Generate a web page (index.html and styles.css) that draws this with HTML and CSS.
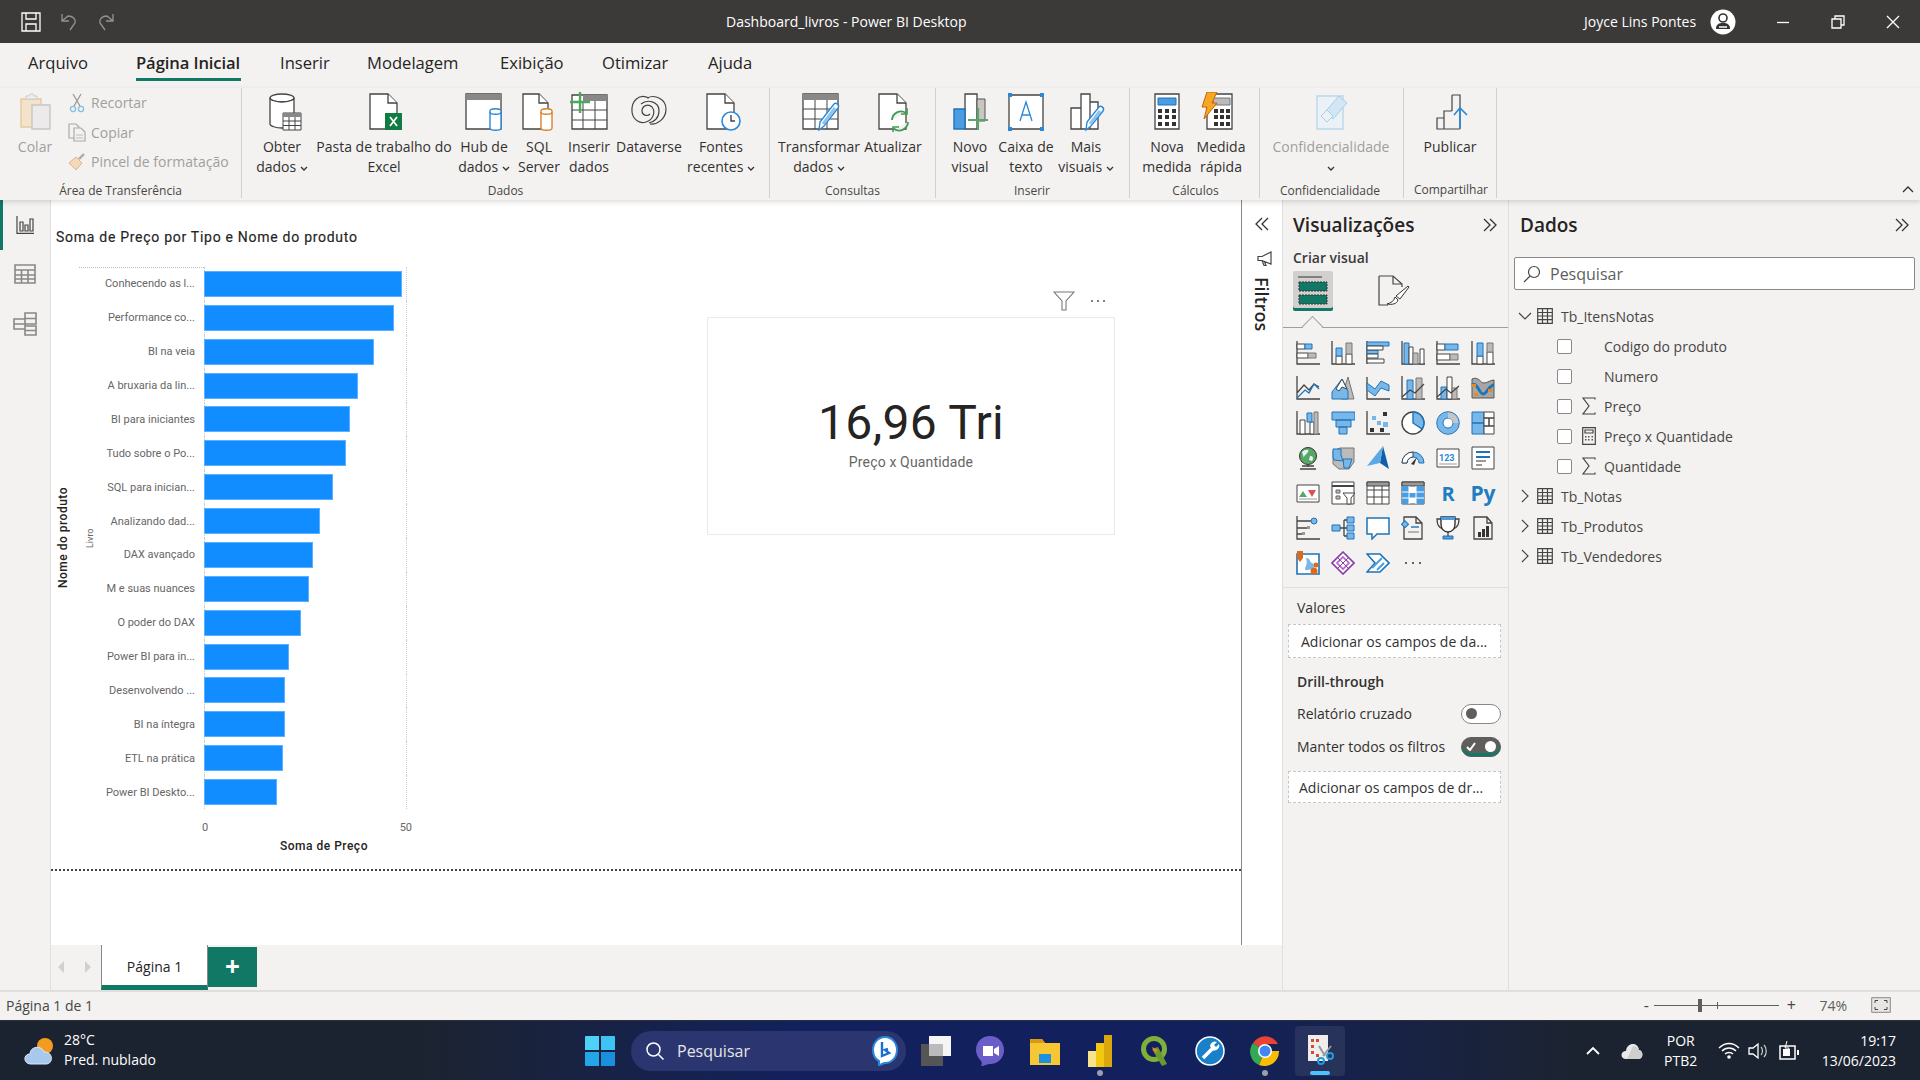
FILE: index.html
```html
<!DOCTYPE html>
<html lang="pt-BR">
<head>
<meta charset="utf-8">
<title>Dashboard_livros - Power BI Desktop</title>
<link rel="stylesheet" href="styles.css">
</head>
<body>
<svg class="defs" width="0" height="0" aria-hidden="true">
  <symbol id="tbl" viewBox="0 0 16 16"><path class="ln" d="M.7.7h14.6v14.6H.7zM.7 4.5h14.6M.7 8h14.6M.7 11.7h14.6M5.5.7v14.6M10.5.7v14.6"/></symbol>
  <symbol id="sig" viewBox="0 0 14 18"><path class="ln" d="M13 2.5V1H1l6 8-6 8h12v-1.5"/></symbol>
  <symbol id="dbl" viewBox="0 0 16 16"><path class="ln2" d="M2 2l6 6-6 6M8 2l6 6-6 6"/></symbol>
  <symbol id="car" viewBox="0 0 8 5"><path class="ln2" d="M1 1l3 3 3-3"/></symbol>
</svg>

<header class="titlebar">
  <div class="qa">
    <svg width="20" height="20" viewBox="0 0 20 20"><path class="wl" d="M1 1h18v18H1zM5 1v6h10V1M5 19v-7h10v7"/></svg>
    <svg class="dim" width="18" height="20" viewBox="0 0 18 20"><path class="wl" d="M2 2v7h7M2 9l6-5c5 0 8 3 7 7l-5 7"/></svg>
    <svg class="dim" width="18" height="20" viewBox="0 0 18 20"><path class="wl" d="M16 2v7H9M16 9l-6-5C5 4 2 7 3 11l5 7"/></svg>
  </div>
  <div class="doc">Dashboard_livros - Power BI Desktop</div>
  <div class="user">
    <span>Joyce Lins Pontes</span>
    <svg width="26" height="26" viewBox="0 0 26 26"><circle cx="13" cy="13" r="12.5" fill="#fff"/><circle cx="13" cy="9" r="4" fill="none" stroke="#333" stroke-width="1.6"/><path d="M6 20c0-5 3-6 7-6s7 1 7 6z" fill="#333"/><path d="M9 18h8" stroke="#fff" stroke-width="1.5"/></svg>
  </div>
  <div class="win">
    <svg width="14" height="14" viewBox="0 0 14 14"><path class="wl" d="M1 7.5h12"/></svg>
    <svg width="14" height="14" viewBox="0 0 14 14"><path class="wl" d="M1 4h9v9H1zM4 4V1h9v9h-3"/></svg>
    <svg width="14" height="14" viewBox="0 0 14 14"><path class="wl" d="M1 1l12 12M13 1L1 13"/></svg>
  </div>
</header>

<nav class="tabs">
  <a class="t t1">Arquivo</a>
  <a class="t t2 on">Página Inicial</a>
  <a class="t t3">Inserir</a>
  <a class="t t4">Modelagem</a>
  <a class="t t5">Exibição</a>
  <a class="t t6">Otimizar</a>
  <a class="t t7">Ajuda</a>
</nav>

<section class="ribbon">
  <div class="grp g-clip">
    <div class="body">
      <div class="btn w-colar off">
        <svg class="ic" width="40" height="40" viewBox="0 0 40 40"><path d="M6 7h20v28H6z" fill="#f4e3cb" stroke="#e6c9a0" stroke-width="1.4"/><path d="M11 7V4h3l1-2h3l1 2h3v3z" fill="#eee" stroke="#ccc"/><path d="M17 13h18v24H17z" fill="#eceaea" stroke="#c8c6c4" stroke-width="1.4"/></svg>
        <span>Colar</span>
      </div>
      <div class="small off">
        <div class="sm"><svg width="18" height="20" viewBox="0 0 18 20"><path d="M5 1l7 12M13 1L6 13" stroke="#999" fill="none" stroke-width="1.3"/><circle cx="5" cy="16" r="2.6" fill="none" stroke="#88bde0" stroke-width="1.3"/><circle cx="13" cy="16" r="2.6" fill="none" stroke="#88bde0" stroke-width="1.3"/></svg>Recortar</div>
        <div class="sm"><svg width="18" height="20" viewBox="0 0 18 20"><path d="M1 2h7l3 3v11H1z" fill="none" stroke="#aaa" stroke-width="1.2"/><path d="M6 6h7l4 4v9H6z" fill="#f3f2f1" stroke="#aaa" stroke-width="1.2"/><path d="M8 13h7M8 16h7" stroke="#bbb"/></svg>Copiar</div>
        <div class="sm"><svg width="18" height="20" viewBox="0 0 18 20"><path d="M11 7l5-5" stroke="#aaa" stroke-width="2.4"/><path d="M8 5l6 6-6 7-7-7z" fill="#f5d9b8" stroke="#d8b58e"/></svg>Pincel de formatação</div>
      </div>
    </div>
    <div class="lbl">Área de Transferência</div>
  </div>

  <div class="grp g-dados">
    <div class="body">
      <div class="btn w-obter">
        <svg class="ic" width="40" height="40" viewBox="0 0 40 40"><ellipse cx="18" cy="6" rx="12" ry="4" class="wf"/><path class="wf" d="M6 6v26c0 2 6 4 12 4h12V6c0 2-6 4-12 4S6 8 6 6z"/><path d="M19 21h18v17H19z" fill="#fff" stroke="#444"/><path d="M19 21h18v4H19z" fill="#8a8886"/><path d="M19 29h18M19 33.500h18M25 25v13M31 25v13" stroke="#444" fill="none"/></svg>
        <span>Obter<br>dados <svg class="car" width="8" height="5"><use href="#car"/></svg></span>
      </div>
      <div class="btn w-pasta">
        <svg class="ic" width="40" height="40" viewBox="0 0 40 40"><path class="wf" d="M6 2h18l9 9v26H6z"/><path class="wf" d="M24 2v9h9"/><path d="M21 21h17v17H21z" fill="#107c41"/><path d="M26 25l7 9M33 25l-7 9" stroke="#fff" stroke-width="1.800"/></svg>
        <span>Pasta de trabalho do<br>Excel</span>
      </div>
      <div class="btn w-hub">
        <svg class="ic" width="40" height="40" viewBox="0 0 40 40"><path class="wf" d="M2 2h35v35H2z"/><path d="M2 2h35v6H2z" fill="#8a8886"/><path d="M26 19c0-3 11-3 11 0v17c0 3-11 3-11 0z" fill="#fff" stroke="#2b88d8" stroke-width="1.400"/><path d="M26 20c0 3 11 3 11 0" fill="none" stroke="#2b88d8" stroke-width="1.400"/></svg>
        <span>Hub de<br>dados <svg class="car" width="8" height="5"><use href="#car"/></svg></span>
      </div>
      <div class="btn w-sql">
        <svg class="ic" width="40" height="40" viewBox="0 0 40 40"><path class="wf" d="M4 2h16l9 9v26H4z"/><path class="wf" d="M20 2v9h9"/><path d="M22 19c0-3 11-3 11 0v17c0 3-11 3-11 0z" fill="#fff" stroke="#d9822b" stroke-width="1.400"/><path d="M22 20c0 3 11 3 11 0" fill="none" stroke="#d9822b" stroke-width="1.400"/></svg>
        <span>SQL<br>Server</span>
      </div>
      <div class="btn w-ins">
        <svg class="ic" width="40" height="40" viewBox="0 0 40 40"><path class="wf" d="M3 3h35v34H3z"/><path d="M14 3h24v6H14z" fill="#8a8886"/><path d="M3 18h35M3 28h35M14 9v28M26 9v28" stroke="#444" fill="none"/><path d="M11 0v21M1 10h20" stroke="#4ca85c" stroke-width="2.400"/></svg>
        <span>Inserir<br>dados</span>
      </div>
      <div class="btn w-dv">
        <svg class="ic" width="40" height="40" viewBox="0 0 40 40"><path class="ln" d="M20 6C10 1 2 9 3 20c1 8 8 12 14 10 7-2 10-10 6-15-4-4-10-1-10 4 0 4 5 6 8 3 M18 6c8-4 19 1 19 11 0 10-9 16-16 15 M12 12c6-5 18-3 18 7 0 7-5 11-10 12"/></svg>
        <span>Dataverse</span>
      </div>
      <div class="btn w-fon">
        <svg class="ic" width="40" height="40" viewBox="0 0 40 40"><path class="wf" d="M6 2h18l9 9v26H6z"/><path class="wf" d="M24 2v9h9"/><circle cx="30" cy="29" r="9" fill="#fff" stroke="#2b88d8" stroke-width="1.600"/><path d="M30 23v6h4" fill="none" stroke="#444" stroke-width="1.400"/></svg>
        <span>Fontes<br>recentes <svg class="car" width="8" height="5"><use href="#car"/></svg></span>
      </div>
    </div>
    <div class="lbl">Dados</div>
  </div>

  <div class="grp g-cons">
    <div class="body">
      <div class="btn w-tra">
        <svg class="ic" width="40" height="40" viewBox="0 0 40 40"><path class="wf" d="M2 2h35v35H2z"/><path d="M2 2h35v6H2z" fill="#8a8886"/><path d="M2 17h35M2 27h35M14 8v29M26 8v29" stroke="#444" fill="none"/><path d="M18 38l1-8 14-18c2-2 6 1 4 4L23 34z" fill="#fff" stroke="#2b88d8" stroke-width="1.400"/><path d="M22 32l12-16" stroke="#8cc4ee" stroke-width="3"/></svg>
        <span>Transformar<br>dados <svg class="car" width="8" height="5"><use href="#car"/></svg></span>
      </div>
      <div class="btn w-atu">
        <svg class="ic" width="40" height="40" viewBox="0 0 40 40"><path class="wf" d="M6 2h18l9 9v26H6z"/><path class="wf" d="M24 2v9h9"/><path d="M19 28a9 9 0 0 1 14-7M35 30a9 9 0 0 1-14 7" fill="#f3f2f1" stroke="#3f9a52" stroke-width="1.800"/><path d="M34 16v6h-6M20 40v-5h6" fill="none" stroke="#3f9a52" stroke-width="1.600"/></svg>
        <span>Atualizar</span>
      </div>
    </div>
    <div class="lbl">Consultas</div>
  </div>

  <div class="grp g-ins">
    <div class="body">
      <div class="btn w-nov">
        <svg class="ic" width="40" height="40" viewBox="0 0 40 40"><path class="wf" d="M15 2h12v35H15z"/><path d="M27 7h8v22h-8z" fill="#c8c6c4" stroke="#555"/><path d="M4 17h11v20H4z" fill="#4a9de0" stroke="#1f73b7" stroke-width="1.400"/><path d="M28 16v22M18 28h20" stroke="#5ba56a" stroke-width="2.200"/></svg>
        <span>Novo<br>visual</span>
      </div>
      <div class="btn w-cai">
        <svg class="ic" width="40" height="40" viewBox="0 0 40 40"><path class="wf" d="M3 3h34v34H3z"/><path d="M2 1h4v4H2zM34 1h4v4h-4zM2 35h4v4H2zM34 35h4v4h-4z" fill="#2b88d8"/><path d="M14 29l6-19 6 19M16 23h8" fill="none" stroke="#2b88d8" stroke-width="1.300"/></svg>
        <span>Caixa de<br>texto</span>
      </div>
      <div class="btn w-mai">
        <svg class="ic" width="40" height="40" viewBox="0 0 40 40"><path class="wf" d="M13 2h9v35h-9zM22 10h8v27h-8zM3 16h10v21H3z"/><path d="M18 38l1-8 12-15c2-2 6 1 4 4L23 34z" fill="#fff" stroke="#2b88d8" stroke-width="1.400"/><path d="M22 32l10-13" stroke="#8cc4ee" stroke-width="3"/></svg>
        <span>Mais<br>visuais <svg class="car" width="8" height="5"><use href="#car"/></svg></span>
      </div>
    </div>
    <div class="lbl">Inserir</div>
  </div>

  <div class="grp g-cal">
    <div class="body">
      <div class="btn w-nma">
        <svg class="ic" width="40" height="40" viewBox="0 0 40 40"><path class="wf" d="M8 2h24v35H8z"/><path d="M11 6h18v7H11z" fill="#4a9de0" stroke="#1f73b7"/><path d="M11 17h4v4h-4zM18 17h4v4h-4zM25 17h4v4h-4zM11 23h4v4h-4zM18 23h4v4h-4zM25 23h4v4h-4zM11 30h4v4h-4zM18 30h4v4h-4zM25 30h4v4h-4z" fill="#333"/></svg>
        <span>Nova<br>medida</span>
      </div>
      <div class="btn w-mer">
        <svg class="ic" width="40" height="40" viewBox="0 0 40 40"><path class="wf" d="M11 2h25v35H11z"/><path d="M17 6h17v7H17z" fill="#bbb" stroke="#777"/><path d="M18 17h4v4h-4zM24 17h4v4h-4zM30 17h4v4h-4zM18 23h4v4h-4zM24 23h4v4h-4zM30 23h4v4h-4zM18 30h4v4h-4zM24 30h4v4h-4zM30 30h4v4h-4z" fill="#333"/><path d="M11 0h10l-5 11h5L8 27l3-12H6z" fill="#f7a823" stroke="#c8620e"/></svg>
        <span>Medida<br>rápida</span>
      </div>
    </div>
    <div class="lbl">Cálculos</div>
  </div>

  <div class="grp g-con">
    <div class="body">
      <div class="btn w-cfd off">
        <svg class="ic" width="40" height="40" viewBox="0 0 40 40"><path d="M6 4h26v33H6z" fill="#eaf2f8" stroke="#bcd8ea" stroke-width="1.400"/><path d="M14 20L28 4l8 7-14 16z" fill="#d2e6f4" stroke="#a9cee6"/><path d="M10 24l6-6 6 6-6 6z" fill="#eaf2f8" stroke="#a9cee6"/></svg>
        <span>Confidencialidade<br><svg class="car" width="8" height="5"><use href="#car"/></svg></span>
      </div>
    </div>
    <div class="lbl">Confidencialidade</div>
  </div>

  <div class="grp g-com">
    <div class="body">
      <div class="btn w-pub">
        <svg class="ic" width="40" height="40" viewBox="0 0 40 40"><path class="ln" d="M18 3h8v34M18 3v16M18 19H10v18h16M10 26H3v11h7"/><path d="M26 37V16M20 23l6-7 7 7" fill="none" stroke="#2b88d8" stroke-width="1.600"/></svg>
        <span>Publicar</span>
      </div>
    </div>
    <div class="lbl">Compartilhar</div>
  </div>
  <svg class="collapse" width="12" height="8" viewBox="0 0 12 8"><path class="ln2" d="M1 7l5-5 5 5"/></svg>
</section>

<main class="main">
  <aside class="rail">
    <div class="rail-i act"><svg width="18" height="18" viewBox="0 0 18 18"><path class="ln" d="M1 0v17.300h17M4 6h3v9H4zM9 9h3v6H9zM14 3h3v12h-3z"/></svg></div>
    <div class="rail-i"><svg width="22" height="20" viewBox="0 0 22 20"><path class="lg" d="M1 1h20v18H1zM1 6h20M1 11h20M1 15h20M7.500 6v13M14 6v13"/></svg></div>
    <div class="rail-i"><svg width="24" height="24" viewBox="0 0 24 24"><path class="lg" d="M12 1h11v11H12zM12 6.500h11M1 7h11v10H1zM1 12h11M12 14h11v9H12zM12 18.500h11"/></svg></div>
  </aside>

  <div class="center">
    <div class="upper">
      <div class="canvas">
        <div class="page"></div>

        <article class="chart">
          <h2 class="ctitle">Soma de Preço por Tipo e Nome do produto</h2>
          <div class="cbody">
            <div class="ytitle">Nome do produto</div>
            <div class="ytype">Livro</div>
            <div class="plot">
              <div class="r"><span class="rl">Conhecendo as l...</span><span class="tr"><i class="bar" style="width:198px"></i></span></div>
              <div class="r"><span class="rl">Performance co...</span><span class="tr"><i class="bar" style="width:190px"></i></span></div>
              <div class="r"><span class="rl">BI na veia</span><span class="tr"><i class="bar" style="width:170px"></i></span></div>
              <div class="r"><span class="rl">A bruxaria da lin...</span><span class="tr"><i class="bar" style="width:154px"></i></span></div>
              <div class="r"><span class="rl">BI para iniciantes</span><span class="tr"><i class="bar" style="width:146px"></i></span></div>
              <div class="r"><span class="rl">Tudo sobre o Po...</span><span class="tr"><i class="bar" style="width:142px"></i></span></div>
              <div class="r"><span class="rl">SQL para inician...</span><span class="tr"><i class="bar" style="width:129px"></i></span></div>
              <div class="r"><span class="rl">Analizando dad...</span><span class="tr"><i class="bar" style="width:116px"></i></span></div>
              <div class="r"><span class="rl">DAX avançado</span><span class="tr"><i class="bar" style="width:109px"></i></span></div>
              <div class="r"><span class="rl">M e suas nuances</span><span class="tr"><i class="bar" style="width:105px"></i></span></div>
              <div class="r"><span class="rl">O poder do DAX</span><span class="tr"><i class="bar" style="width:97px"></i></span></div>
              <div class="r"><span class="rl">Power BI para in...</span><span class="tr"><i class="bar" style="width:85px"></i></span></div>
              <div class="r"><span class="rl">Desenvolvendo ...</span><span class="tr"><i class="bar" style="width:81px"></i></span></div>
              <div class="r"><span class="rl">BI na íntegra</span><span class="tr"><i class="bar" style="width:81px"></i></span></div>
              <div class="r"><span class="rl">ETL na prática</span><span class="tr"><i class="bar" style="width:79px"></i></span></div>
              <div class="r"><span class="rl">Power BI Deskto...</span><span class="tr"><i class="bar" style="width:73px"></i></span></div>
            </div>
          </div>
          <div class="ticks"><span>0</span><span>50</span></div>
          <div class="xtitle">Soma de Preço</div>
        </article>

        <article class="card">
          <div class="cardtools">
            <svg width="22" height="20" viewBox="0 0 22 20"><path d="M1 1h20l-8 9v9H9v-9z" fill="none" stroke="#777" stroke-width="1.100"/></svg>
            <span class="dots"><i></i><i></i><i></i></span>
          </div>
          <div class="val">16,96 Tri</div>
          <div class="vlab">Preço x Quantidade</div>
        </article>
      </div>

      <aside class="filters">
        <svg class="fdbl" width="16" height="16"><use href="#dbl" transform="matrix(-1 0 0 1 16 0)"/></svg>
        <svg class="fmeg" width="16" height="16" viewBox="0 0 16 16"><path class="ln" d="M14 1v12L5 9.500H1v-4h4zM5 9.500l2 5h2l-1.500-4"/></svg>
        <div class="ftext">Filtros</div>
      </aside>
    </div>
    <div class="pages">
      <svg class="parr" width="8" height="12" viewBox="0 0 8 12"><path d="M7 0v12L1 6z" fill="#d2d0ce"/></svg>
      <svg class="parr p2" width="8" height="12" viewBox="0 0 8 12"><path d="M1 0v12l6-6z" fill="#d2d0ce"/></svg>
      <div class="ptab">Página 1</div>
      <div class="padd">+</div>
    </div>
  </div>

  <aside class="viz">
    <div class="phead"><h3>Visualizações</h3><svg width="16" height="16"><use href="#dbl"/></svg></div>
    <div class="build">Criar visual</div>
    <div class="modes">
      <div class="mode on">
        <svg width="32" height="32" viewBox="0 0 32 32"><path d="M1 2h24" stroke="#333"/><path d="M2 7h28v9H2zM2 20h28v9H2z" fill="#117865" stroke="#333" stroke-dasharray="2 1"/></svg>
      </div>
      <div class="mode">
        <svg width="32" height="32" viewBox="0 0 32 32"><path class="ln" d="M1 1h14l9 8v3M1 1v29h9M15 1v8h9"/><path d="M9 29c4-1 7-3 8-7l3 3c-1 4-6 5-11 4z" fill="#fff" stroke="#333"/><path d="M18 21L30 11l1 1-9 12z" fill="#fff" stroke="#333"/></svg>
      </div>
    </div>
    <div class="notch"></div>
    <div class="vgrid">
      <svg viewBox="0 0 24 24"><path class="k" d="M1 0v23h23"/><path class="w" d="M1 3h8v5H1zM1 12h11v5H1z"/><path class="b" d="M9 3h7v5H9z"/><path class="g" d="M12 12h8v5h-8z"/></svg>
      <svg viewBox="0 0 24 24"><path class="k" d="M1 0v23h23"/><path class="w" d="M5 15h6v8H5zM15 13h6v10h-6z"/><path class="b" d="M5 7h6v8H5z"/><path class="g" d="M15 2h6v11h-6z"/></svg>
      <svg viewBox="0 0 24 24"><path class="k" d="M1 0v23"/><path class="b" d="M1 1h22v4H1zM1 9h11v4H1z"/><path class="w" d="M1 5h16v4H1zM1 13h11v4H1zM1 18h17v4H1z"/></svg>
      <svg viewBox="0 0 24 24"><path class="k" d="M1 0v23h23"/><path class="b" d="M3 2h5v21H3z"/><path class="w" d="M8 6h4v17H8zM19 8h4v15h-4z"/><path class="g" d="M12 12h5v11h-5z"/></svg>
      <svg viewBox="0 0 24 24"><path class="k" d="M1 0v23h23"/><path class="w" d="M1 3h8v6H1zM1 13h13v6H1z"/><path class="b" d="M9 3h13v6H9z"/><path class="g" d="M14 13h8v6h-8z"/></svg>
      <svg viewBox="0 0 24 24"><path class="k" d="M1 0v23h23"/><path class="w" d="M6 15h6v8H6zM16 11h6v12h-6z"/><path class="b" d="M6 2h6v13H6z"/><path class="g" d="M16 2h6v9h-6z"/></svg>

      <svg viewBox="0 0 24 24"><path class="k" d="M1 0v23h23M1 17l7-8 5 5 5-6 5 3"/><path class="c" d="M1 22l8-8 4 3 5-9 5 5"/></svg>
      <svg viewBox="0 0 24 24"><path class="g" d="M10 23L17 1l6 22z"/><path class="b" d="M1 23v-7L11 3l6 12v8z"/><path class="w" d="M5 13l6-10 5 10-5-2-3 4z"/></svg>
      <svg viewBox="0 0 24 24"><path class="k" d="M1 1v22h23"/><path class="b" d="M1 7l8 6 6-8 8 4v6l-8-3-6 8-8-6z"/></svg>
      <svg viewBox="0 0 24 24"><path class="k" d="M1 0v23h23"/><path class="b" d="M6 4h6v19H6z"/><path class="g" d="M15 2h6v21h-6z"/><path class="k" d="M1 21l8-7 5 3 9-9"/></svg>
      <svg viewBox="0 0 24 24"><path class="k" d="M1 0v23h23"/><path class="b" d="M5 11h6v12H5z"/><path class="w" d="M11 1h5v22h-5z"/><path class="g" d="M16 12h5v11h-5z"/><path class="k" d="M1 21l9-8 5 4 8-7"/></svg>
      <svg viewBox="0 0 24 24"><path d="M1 3c7-3 8 4 12 4s6-3 10-3v18H1z" fill="#a8a6a4" stroke="#555"/><path d="M1 9c6-3 7 9 11 9s6-9 11-9" fill="none" stroke="#1f73b7" stroke-width="3"/><path d="M3 17h4v3H3zM17 13h4v3h-4zM1 8h4v3H1z" fill="#e88a1f"/></svg>

      <svg viewBox="0 0 24 24"><path class="k" d="M1 0v23h23"/><path class="w" d="M4 9h5v14H4zM14 11h4v12h-4z"/><path class="g" d="M18 1h4v22h-4z"/><path class="b" d="M11 2h5v9h-5z"/></svg>
      <svg viewBox="0 0 24 24"><path class="b" d="M1 1h23v8H1zM5 9h15v7H5zM8 16h8v7H8z"/></svg>
      <svg viewBox="0 0 24 24"><path class="k" d="M1 0v23h23"/><path d="M4 17h4v4H4zM17 1h4v4h-4zM14 17h4v4h-4z" fill="#333"/><path d="M6 5h4v4H6zM11 10h4v4h-4zM17 11h5v5h-5z" fill="#78b7ea"/></svg>
      <svg viewBox="0 0 24 24"><circle cx="12" cy="12" r="11" fill="#fff" stroke="#444" stroke-width="1.400"/><path d="M12 12V1a11 11 0 0 1 9 17z" fill="#78b7ea" stroke="#1f73b7" stroke-width="1.400"/></svg>
      <svg viewBox="0 0 24 24"><circle cx="12" cy="12" r="8" fill="none" stroke="#78b7ea" stroke-width="6"/><circle cx="12" cy="12" r="11.300" fill="none" stroke="#1f73b7" stroke-width="1"/><circle cx="12" cy="12" r="5" fill="#fff" stroke="#1f73b7"/><path d="M12 7A5 5 0 0 1 17 12h5.500A10.500 10.500 0 0 0 12 1.500z" fill="#c8c6c4"/></svg>
      <svg viewBox="0 0 24 24"><path class="b" d="M1 1h12v11H1zM1 12h12v11H1z"/><path class="w" d="M13 1h10v6H13zM13 7h5v8h-5zM18 7h5v8h-5zM13 15h10v8H13z"/></svg>

      <svg viewBox="0 0 24 24"><circle cx="12" cy="10" r="8.500" fill="#57a867" stroke="#333"/><path d="M6 6c3-3 8-3 6 0s-4 3-4 6zM14 10c3 0 4 2 2 5l-3-1z" fill="#e8f2f8"/><path class="k" d="M6 20h12M12 18v3M4 23h16"/></svg>
      <svg viewBox="0 0 24 24"><path class="g" d="M9 2h14v14l-5 7H8l-6-5V5z"/><path class="b" d="M2 3h8v6l2 6-9-1-1-3z"/><path class="b" d="M12 13h9l-3 9h-5z"/></svg>
      <svg viewBox="0 0 24 24"><path d="M17 0l6 23-9-6z" fill="#0f5fa8"/><path d="M17 0L1 20l13-3z" fill="#5aa9e6"/></svg>
      <svg viewBox="0 0 24 24"><path d="M1 17a11 11 0 0 1 22 0h-5a6 6 0 0 0-12 0z" fill="#78b7ea" stroke="#1f73b7"/><path d="M1 17a11 11 0 0 1 11-11v5a6 6 0 0 0-6 6z" fill="#fff" stroke="#444"/><path d="M10 18l6-7-3 8z" fill="#333"/></svg>
      <svg viewBox="0 0 24 24"><path class="w" d="M1 3h22v18H1z"/><text class="t123" x="3" y="15">123</text><path d="M3 18h18" stroke="#999"/></svg>
      <svg viewBox="0 0 24 24"><path class="w" d="M1 1h22v22H1z"/><path d="M5 6h14M5 11h14" stroke="#1f73b7" stroke-width="2"/><path d="M5 15h10M5 19h6" stroke="#999" stroke-width="2"/></svg>

      <svg viewBox="0 0 24 24"><path class="w" d="M1 4h22v17H1z"/><path d="M3 16l4-6 4 6z" fill="#57a867"/><path d="M12 9h8l-4 7z" fill="#e0504a"/><path d="M3 18h18" stroke="#999"/></svg>
      <svg viewBox="0 0 24 24"><path class="w" d="M1 1h22v22H1z"/><path d="M1 5h22" stroke="#444" stroke-width="2"/><path d="M5 9h4v3H5zM5 15h4v3H5z" fill="#bbb" stroke="#666"/><path d="M12 12h12l-4 5v6h-4v-6z" fill="#fff" stroke="#444"/></svg>
      <svg viewBox="0 0 24 24"><path class="w" d="M1 1h22v22H1zM1 9h22M1 16h22M8 5v18M16 5v18"/><path d="M1 1h22v4H1z" fill="#999" stroke="#444"/></svg>
      <svg viewBox="0 0 24 24"><path class="w" d="M1 1h22v22H1z"/><path d="M1 1h22v4H1z" fill="#999" stroke="#444"/><path d="M1 5h7v18H1zM15 5h8v18h-8zM8 12h7v5H8z" fill="#4a9de0"/><path d="M1 11h22M1 17h22M8 5v18M15 5v18" stroke="#fff"/></svg>
      <span class="rtxt">R</span>
      <span class="pytxt">Py</span>

      <svg viewBox="0 0 24 24"><path class="k" d="M1 0v23h23M1 5h14M1 12h10M1 18h5"/><circle cx="18" cy="5" r="3" fill="#78b7ea" stroke="#1f73b7"/><path d="M11 10h3v3h-3zM6 16h3v3H6z" fill="#999"/></svg>
      <svg viewBox="0 0 24 24"><path class="b" d="M1 9h8v6H1zM16 1h7v6h-7zM16 9h7v6h-7zM16 17h7v6h-7z"/><path class="k" d="M9 12h7M13 4v16M13 4h3M13 20h3"/></svg>
      <svg viewBox="0 0 24 24"><path d="M1 2h22v16H11l-5 5v-5H1z" fill="#fff" stroke="#1f73b7" stroke-width="1.500"/></svg>
      <svg viewBox="0 0 24 24"><path class="k" d="M3 1h12l6 6v16H3zM15 1v6h6"/><path d="M1 6h5v5H1z" fill="#78b7ea" stroke="#1f73b7" transform="rotate(45 4 9)"/><path d="M10 11h8" stroke="#1f73b7" stroke-width="1.400"/><path d="M7 16h11" stroke="#999" stroke-width="1.400"/></svg>
      <svg viewBox="0 0 24 24"><path class="k" d="M5 3H1c0 6 2 9 6 10M19 3h4c0 6-2 9-6 10M12 16v4"/><path d="M5 1h14v7c0 5-3 8-7 8s-7-3-7-8z" fill="#fff" stroke="#333" stroke-width="1.400"/><path d="M5 1h14v3H5z" fill="#4a9de0"/><path d="M7 20h10v3H7z" fill="#4a9de0" stroke="#1f73b7"/></svg>
      <svg viewBox="0 0 24 24"><path class="k" d="M3 1h13l5 6v16H3zM16 1v6h5"/><path d="M7 16h3v5H7zM11 13h3v8h-3zM15 10h3v11h-3z" fill="#333"/></svg>

      <svg viewBox="0 0 24 24"><path d="M1 3h22v20H1z" fill="#fff" stroke="#1f73b7" stroke-width="1.600"/><path d="M10 7c5 0 3 4 6 5s2 6 0 6-7 3-7 0 3-4 1-11z" fill="#78b7ea"/><path d="M1 0h6v7l-3 4-3-4z" fill="#d96b1e"/><circle cx="20" cy="14" r="2.500" fill="#d96b1e"/><circle cx="18" cy="20" r="3.500" fill="#d96b1e"/></svg>
      <svg viewBox="0 0 24 24"><path d="M12 1l11 11-11 11L1 12z" fill="#fff" stroke="#8a3aa8" stroke-width="1.600"/><path d="M12 6l6 6-6 6-6-6z" fill="none" stroke="#b060c8" stroke-width="1.600"/><path d="M7 7l10 10M17 7L7 17" stroke="#8a3aa8"/></svg>
      <svg viewBox="0 0 24 24"><path d="M1 3h13l9 9-9 9H1l8-9z" fill="#fff" stroke="#1f73b7" stroke-width="1.600"/><path d="M6 17L16 7M11 19l7-7" stroke="#4a9de0" stroke-width="2"/></svg>
      <span class="vdots"><i></i><i></i><i></i></span>
    </div>
    <div class="vdiv"></div>
    <div class="fieldh">Valores</div>
    <div class="drop d1">Adicionar os campos de da...</div>
    <div class="fieldh bold">Drill-through</div>
    <div class="trow tfirst"><span>Relatório cruzado</span><span class="tog"><i></i></span></div>
    <div class="trow"><span>Manter todos os filtros</span><span class="tog on"><svg width="10" height="9" viewBox="0 0 10 9"><path d="M1 5l3 3 5-7" fill="none" stroke="#fff" stroke-width="2"/></svg><i></i></span></div>
    <div class="drop d2">Adicionar os campos de dr...</div>
  </aside>

  <aside class="data">
    <div class="phead dh"><h3>Dados</h3><svg width="16" height="16"><use href="#dbl"/></svg></div>
    <div class="search">
      <svg width="18" height="18" viewBox="0 0 18 18"><circle cx="11" cy="7" r="5.500" fill="none" stroke="#444" stroke-width="1.200"/><path d="M7 11l-6 6" stroke="#444" stroke-width="1.200"/></svg>
      <span>Pesquisar</span>
    </div>
    <ul class="tree">
      <li class="node"><svg class="chev" width="14" height="14" viewBox="0 0 14 14"><path class="ln" d="M1 4l6 6 6-6"/></svg><svg class="tbi" width="16" height="16"><use href="#tbl"/></svg>Tb_ItensNotas</li>
      <li class="leaf"><span class="cb"></span><span class="fi"></span>Codigo do produto</li>
      <li class="leaf"><span class="cb"></span><span class="fi"></span>Numero</li>
      <li class="leaf"><span class="cb"></span><span class="fi"><svg width="14" height="18"><use href="#sig"/></svg></span>Preço</li>
      <li class="leaf"><span class="cb"></span><span class="fi"><svg width="14" height="18" viewBox="0 0 14 18"><path class="ln" d="M.7.7h12.600v16.600H.7zM3 3h8v3H3z"/><path d="M3 9h1.500v1.500H3zM6 9h1.500v1.500H6zM9.500 9H11v1.500H9.500zM3 12h1.500v1.500H3zM6 12h1.500v1.500H6zM9.500 12H11v1.500H9.500z" fill="#555"/></svg></span>Preço x Quantidade</li>
      <li class="leaf"><span class="cb"></span><span class="fi"><svg width="14" height="18"><use href="#sig"/></svg></span>Quantidade</li>
      <li class="node"><svg class="chev" width="14" height="14" viewBox="0 0 14 14"><path class="ln" d="M4 1l6 6-6 6"/></svg><svg class="tbi" width="16" height="16"><use href="#tbl"/></svg>Tb_Notas</li>
      <li class="node"><svg class="chev" width="14" height="14" viewBox="0 0 14 14"><path class="ln" d="M4 1l6 6-6 6"/></svg><svg class="tbi" width="16" height="16"><use href="#tbl"/></svg>Tb_Produtos</li>
      <li class="node"><svg class="chev" width="14" height="14" viewBox="0 0 14 14"><path class="ln" d="M4 1l6 6-6 6"/></svg><svg class="tbi" width="16" height="16"><use href="#tbl"/></svg>Tb_Vendedores</li>
    </ul>
  </aside>
</main>

<footer class="status">
  <span class="pgn">Página 1 de 1</span>
  <div class="zoomctl">
    <span class="zb">-</span>
    <span class="slider"><i class="thumb"></i><i class="mid"></i></span>
    <span class="zb">+</span>
    <span class="pct">74%</span>
    <svg width="20" height="16" viewBox="0 0 20 16"><path d="M.7.7h18.600v14.600H.7z" fill="#e8e6e4" stroke="#8a8886"/><path d="M4 6V3.500h3M13 3.500h3V6M16 10v2.500h-3M7 12.500H4V10" fill="none" stroke="#444"/></svg>
  </div>
</footer>

<footer class="taskbar">
  <div class="weather">
    <svg width="32" height="28" viewBox="0 0 32 28"><circle cx="21" cy="9" r="8" fill="#f39c1f"/><path d="M7 27c-8 0-8-10-1-10 0-8 12-9 14-2 9-1 10 12 2 12z" fill="#a9c8ee" stroke="#dce8f8"/></svg>
    <div class="wtext"><span>28°C</span><span>Pred. nublado</span></div>
  </div>
  <div class="apps">
    <svg class="winlogo" width="30" height="30" viewBox="0 0 30 30"><path d="M0 1q0-1 1-1h13v14H0z" fill="#4fd1f7"/><path d="M16 0h13q1 0 1 1v13H16z" fill="#3ec4f2"/><path d="M0 16h14v14H1q-1 0-1-1z" fill="#22a6e8"/><path d="M16 16h14v13q0 1-1 1H16z" fill="#1a8fdb"/></svg>
    <div class="tsearch">
      <svg width="20" height="20" viewBox="0 0 20 20"><circle cx="8.500" cy="8.500" r="6.500" fill="none" stroke="#fff" stroke-width="1.500"/><path d="M13.500 13.500l5 5" stroke="#fff" stroke-width="1.500"/></svg>
      <span>Pesquisar</span>
      <svg class="bing" width="26" height="30" viewBox="0 0 26 30"><path d="M13 1c7 0 12 6 12 13s-5 13-12 13c-2 0-4 2-6 2v-4C3 23 1 19 1 14 1 7 6 1 13 1z" fill="#fff" stroke="#2b88d8" stroke-width="2"/><path d="M10 6v14l7-3-4-3 3-1" fill="none" stroke="#1b6fd0" stroke-width="2.400"/></svg>
    </div>
    <svg class="tv" width="30" height="30" viewBox="0 0 30 30"><path d="M0 8h22v22H0z" fill="#555"/><path d="M8 0h22v20H8z" fill="#f5f5f5"/><path d="M8 8h14v12H8z" fill="#bbb"/></svg>
    <div class="app"><svg width="30" height="32" viewBox="0 0 30 32"><path d="M15 1c8 0 14 6 14 14s-6 14-14 14c-3 0-6 2-9 2 1-2 1-4 0-5C3 23 1 19 1 15 1 7 7 1 15 1z" fill="#6a5fc9"/><path d="M8 11h10v10H8zM19 14l5-3v10l-5-3z" fill="#fff"/></svg></div>
    <div class="app"><svg width="32" height="30" viewBox="0 0 32 30"><path d="M1 3h12l3 4h15v22H1z" fill="#f7c733"/><path d="M1 3h12l3 4H1z" fill="#d99a12"/><path d="M10 18h12v9H10z" fill="#1f8fe0"/></svg></div>
    <div class="app dot"><svg width="24" height="32" viewBox="0 0 24 32"><path d="M0 16h9v16H0z" fill="#f7e38a"/><path d="M8 8h9v24H8z" fill="#f2c811"/><path d="M16 0h8v32h-8z" fill="#d9a80e"/></svg></div>
    <div class="app"><svg width="30" height="32" viewBox="0 0 30 32"><circle cx="14" cy="14" r="10.500" fill="none" stroke="#7fb03a" stroke-width="5"/><path d="M12 14l10 17 5-2-9-17z" fill="#6a9a2c"/><path d="M12 12l3 6 3-3z" fill="#e8842a"/></svg></div>
    <div class="app"><svg width="30" height="30" viewBox="0 0 30 30"><circle cx="15" cy="15" r="14" fill="#1a80c8" stroke="#fff" stroke-width="1.500"/><path d="M8 22l9-9" stroke="#fff" stroke-width="3.500"/><path d="M15 10a5 5 0 0 1 7-4l-3 3 2 2 3-3a5 5 0 0 1-7 6z" fill="#fff"/></svg></div>
    <div class="app dot"><svg width="32" height="32" viewBox="0 0 32 32"><path d="M16 16L4 8a14.500 14.500 0 0 1 25 1H16z" fill="#ea4335"/><path d="M16 16l-6 14A14.500 14.500 0 0 1 4 8z" fill="#34a853"/><path d="M16 16h14a14.500 14.500 0 0 1-20 14z" fill="#fbbc05"/><circle cx="16" cy="16" r="7" fill="#fff"/><circle cx="16" cy="16" r="5.500" fill="#4285f4"/></svg></div>
    <div class="app act"><svg width="32" height="34" viewBox="0 0 32 34"><path d="M4 1h20v26H4z" fill="#eee"/><path d="M7 5h3v3H7zM12 5h3v3h-3zM7 11h3v3H7zM7 17h3v3H7zM12 20h3v3h-3z" fill="#d9492e"/><path d="M15 12l6 10M27 12l-8 10" stroke="#999" stroke-width="2"/><circle cx="17" cy="27" r="3" fill="none" stroke="#1f9be0" stroke-width="2"/><circle cx="26" cy="22" r="3" fill="none" stroke="#1f9be0" stroke-width="2"/></svg></div>
  </div>
  <div class="tray">
    <svg width="16" height="10" viewBox="0 0 16 10"><path d="M2 8l6-6 6 6" fill="none" stroke="#fff" stroke-width="1.800"/></svg>
    <svg class="cloud" width="22" height="18" viewBox="0 0 22 18"><path d="M5 17c-6 0-6-8 0-8 1-9 12-9 13-1 5 1 4 9 0 9z" fill="#e8e8e8"/><path d="M12 4c4 0 6 3 6 4 5 1 4 9 0 9H6z" fill="#cfcfcf"/></svg>
    <div class="lang"><span>POR</span><span>PTB2</span></div>
    <svg width="22" height="18" viewBox="0 0 22 18"><path d="M1 6c6-6 14-6 20 0M4 9c4-4 10-4 14 0M7 12c2-2 6-2 8 0" fill="none" stroke="#fff" stroke-width="1.400"/><circle cx="11" cy="15" r="1.800" fill="#fff"/></svg>
    <svg width="20" height="18" viewBox="0 0 20 18"><path d="M1 6h4l5-4v14l-5-4H1z" fill="none" stroke="#fff" stroke-width="1.300"/><path d="M13 5c2 2 2 6 0 8M16 3c3 3 3 9 0 12" fill="none" stroke="#ccc" stroke-width="1.200"/></svg>
    <svg class="batt" width="22" height="22" viewBox="0 0 22 22"><path d="M2 6h15v13H2z" fill="none" stroke="#fff" stroke-width="1.500"/><path d="M5 9h7v7H5z" fill="#fff"/><path d="M19 10h2v5h-2z" fill="#fff"/><path d="M9 1L7 8h4l-2 6" stroke="#fff" fill="none"/></svg>
    <div class="clock"><span>19:17</span><span>13/06/2023</span></div>
  </div>
</footer>
</body>
</html>
```

FILE: styles.css
```css
* { box-sizing: border-box; }
html, body { margin: 0; padding: 0; }
body {
  width: 1920px; height: 1080px; overflow: hidden;
  display: flex; flex-direction: column;
  font-family: "Open Sans", "Noto Sans", sans-serif;
  color: #252423; background: #f3f2f1;
}
svg { display: block; flex: none; }
.defs { position: absolute; }
.ln { fill: none; stroke: #444; stroke-width: 1.2; }
.ln2 { fill: none; stroke: #333; stroke-width: 1.3; }
.lg { fill: none; stroke: #8a8886; stroke-width: 1.6; }
.wl { fill: none; stroke: #fff; stroke-width: 1.3; }
.wf { fill: #fff; stroke: #444; stroke-width: 1.3; }
.dim { opacity: .45; }

/* title */
.titlebar { height: 43px; flex: none; background: #3b3a39; color: #fff; display: flex; align-items: center; font-size: 14px; position: relative; }
.qa { display: flex; gap: 19px; padding-left: 21px; width: 726px; }
.doc { width: 858px; }
.user { display: flex; align-items: center; gap: 14px; width: 192px; }
.win { display: flex; gap: 41px; }

/* tabs */
.tabs { height: 45px; flex: none; position: relative; display: flex; font-size: 16.6px; padding-left: 28px; }
.t { line-height: 40px; height: 38px; white-space: nowrap; color: #252423; }
.t1 { width: 108px; }
.t2 { width: 144px; font-weight: 600; }
.t3 { width: 87px; }
.t4 { width: 133px; }
.t5 { width: 102px; }
.t6 { width: 106px; }
.on { box-shadow: inset 0 -3px 0 #117865; border-radius: 0; }
.t2.on { width: 105px; margin-right: 39px; letter-spacing: -.1px; }

/* ribbon */
.ribbon { height: 112px; flex: none; display: flex; position: relative; z-index: 3; box-shadow: 0 2px 5px rgba(0,0,0,.14); font-size: 14px; padding-bottom: 2px; }
.grp { display: flex; flex-direction: column; border-right: 1px solid #d2d0ce; height: 110px; padding-top: 2px; }
.g-clip { width: 242px; padding-left: 8px; }
.g-dados { width: 528px; padding-left: 9px; }
.g-cons { width: 166px; padding-left: 9px; }
.g-ins { width: 194px; padding-left: 8px; }
.g-cal { width: 130px; padding-left: 11px; }
.g-con { width: 144px; padding-left: 6px; }
.g-com { width: 93px; padding-left: 11px; }
.body { height: 88px; display: flex; }
.lbl { height: 16px; margin-top: 6px; line-height: 16px; font-size: 12px; color: #484644; text-align: center; white-space: nowrap; margin-left: -9px; }
.g-clip .lbl { margin-left: -8px; }
.btn { display: flex; flex-direction: column; align-items: center; text-align: center; line-height: 20px; white-space: nowrap; color: #323130; }
.btn .ic { height: 47px; padding: 2px 0 5px; width: 40px; }
.btn span { display: block; }
.car { display: inline-block; vertical-align: middle; }
.off, .off .btn { color: #a19f9d; }
.w-colar { width: 54px; }
.small { display: flex; flex-direction: column; margin-top: -2px; }
.sm { display: flex; align-items: center; gap: 5px; height: 29.5px; padding-left: 6px; }
.w-obter { width: 62px; } .w-pasta { width: 142px; } .w-hub { width: 58px; } .w-sql { width: 52px; }
.w-ins { width: 48px; } .w-dv { width: 72px; } .w-fon { width: 72px; }
.w-tra { width: 80px; } .w-atu { width: 68px; }
.w-nov { width: 52px; } .w-cai { width: 60px; } .w-mai { width: 60px; }
.w-nma { width: 52px; } .w-mer { width: 56px; }
.w-cfd { width: 130px; } .w-pub { width: 70px; }
.w-obter .ic { margin-left: 4px; }
.w-tra .ic { margin-left: 4px; }
.w-mai .ic { margin-left: 4px; }
.w-mer .ic { margin-right: 10px; }
.w-pub .ic { margin-left: 8px; }
.collapse { margin: auto 6px 5px auto; }

/* main */
.main { flex: 1; display: flex; min-height: 0; }
.rail { width: 51px; flex: none; border-right: 1px solid #e1dfdd; display: flex; flex-direction: column; }
.rail-i { height: 50px; display: flex; align-items: center; justify-content: center; }
.rail-i + .rail-i { height: 48px; }
.rail-i + .rail-i + .rail-i { height: 52px; }
.rail-i.act { box-shadow: inset 3px 0 0 #117865; }
.center { width: 1231px; flex: none; display: flex; flex-direction: column; }
.upper { flex: 1; display: flex; min-height: 0; }
.canvas { width: 1190px; background: #fff; position: relative; }
.page { height: 671px; border-bottom: 2px dotted #444; }

.chart { position: absolute; left: 5px; top: 27px; width: 460px; }
.ctitle { margin: 0; font: 400 14px/20px Roboto, sans-serif; letter-spacing: .72px; color: #252423; height: 20px; -webkit-text-stroke: .15px #252423; }
.cbody { display: flex; margin-top: 20px; position: relative; }
.ytitle, .ytype { writing-mode: vertical-rl; transform: rotate(180deg); text-align: center; font-family: Roboto, sans-serif; }
.ytitle { width: 16px; font-size: 12px; font-weight: 500; color: #252423; letter-spacing: .5px; }
.ytype { width: 14px; margin-left: 13px; font-size: 9px; color: #666; }
.plot { width: 320px; margin-left: -12px; position: relative; }
.plot::before { content: ""; position: absolute; left: -8px; width: 125px; top: 0; border-top: 1px dotted #bbb; }
.r { height: 33.88px; display: grid; grid-template-columns: 108px 203px; column-gap: 9px; align-items: center; }
.rl { font: 11px Roboto, sans-serif; color: #666; text-align: right; white-space: nowrap; }
.tr { height: 33.88px; display: flex; align-items: center; border-left: 1px dotted #ccc; border-right: 1px dotted #ccc; }
.bar { display: block; height: 26px; background: #118dff; border: 1px solid #5cb0ff; margin-left: -1px; }
.ticks { display: flex; justify-content: space-between; width: 210px; margin-left: 146px; font: 11px Roboto, sans-serif; color: #666; margin-top: 12px; line-height: 14px; }
.xtitle { width: 100%; font: 500 12px/16px Roboto, sans-serif; padding-left: 224px; margin-top: 3px; letter-spacing: .5px; color: #252423; }

.card { position: absolute; left: 656px; top: 117px; width: 408px; height: 218px; border: 1px solid #eaeaea; display: flex; flex-direction: column; align-items: center; padding-top: 77px; }
.cardtools { position: absolute; right: 9px; bottom: 100%; margin-bottom: 7px; display: flex; align-items: center; gap: 16px; }
.dots, .vdots { display: flex; gap: 4px; }
.dots i, .vdots i { width: 2px; height: 2px; background: #555; border-radius: 50%; display: block; }
.val { font: 400 48px/56px Roboto, sans-serif; color: #252423; letter-spacing: .3px; }
.vlab { font: 14px/18px Roboto, sans-serif; color: #666; margin-top: 2px; letter-spacing: .15px; }

.filters { width: 41px; border-left: 1px solid #8a8886; background: #fff; position: relative; display: flex; flex-direction: column; align-items: center; padding-top: 16px; }
.fmeg { margin-top: 19px; margin-left: 6px; }
.ftext { writing-mode: vertical-rl; font: 600 18px/20px "Open Sans", sans-serif; margin-top: 10px; color: #252423; }

.pages { height: 45px; flex: none; display: flex; align-items: flex-start; padding-left: 6px; background: #f3f2f1; }
.parr { margin: 16px 0 0 0; }
.p2 { margin-left: 19px; }
.ptab { width: 107px; height: 45px; margin-left: 9px; background: #fff; border-left: 1px solid #8a8886; border-right: 1px solid #8a8886; border-bottom: 5px solid #117865; text-align: center; font-size: 14px; line-height: 43px; color: #252423; }
.padd { width: 49px; height: 40px; margin-top: 2px; background: #117865; color: #fff; font: 700 26px/39px "Open Sans", sans-serif; text-align: center; }

/* viz */
.viz { width: 227px; flex: none; border-left: 1px solid #e1dfdd; border-right: 1px solid #e1dfdd; position: relative; font-size: 14px; padding-top: 12px; }
.phead { display: flex; align-items: center; justify-content: space-between; padding: 0 10px 0 10px; height: 26px; }
.phead h3 { margin: 0; font-size: 19px; font-weight: 600; color: #252423; }
.build { padding-left: 10px; margin-top: 10px; font-weight: 600; line-height: 20px; color: #3b3a39; font-size: 14px; }
.modes { display: flex; padding-left: 10px; margin-top: 3px; height: 40px; }
.mode { width: 40px; height: 40px; display: flex; align-items: center; justify-content: center; border-radius: 2px; }
.mode.on { background: #d2d0ce; }
.mode + .mode { margin-left: 41px; }
.notch { height: 17px; border-bottom: 1px solid #a19f9d; position: relative; }
.notch::after { content: ""; position: absolute; left: 22px; bottom: -7px; width: 14px; height: 14px; background: #f3f2f1; border-left: 1px solid #a19f9d; border-top: 1px solid #a19f9d; transform: rotate(45deg); }
.vgrid { display: grid; grid-template-columns: repeat(6, 24px); grid-auto-rows: 24px; gap: 11px; padding: 13px 0 0 13px; }
.vgrid svg { width: 24px; height: 24px; }
.k { fill: none; stroke: #444; stroke-width: 1.3; }
.c { fill: none; stroke: #1f73b7; stroke-width: 1.3; }
.b { fill: #78b7ea; stroke: #1f73b7; stroke-width: 1; }
.g { fill: #bdbbb9; stroke: #777; stroke-width: 1; }
.w { fill: #fff; stroke: #444; stroke-width: 1; }
.t123 { font: 700 9px Roboto, sans-serif; fill: #2b88d8; }
.rtxt, .pytxt { color: #1f7dc1; font-weight: 700; display: flex; align-items: center; justify-content: center; font-family: "Open Sans", sans-serif; }
.rtxt { font-size: 20px; }
.pytxt { font-size: 21px; }
.vdots { align-items: center; justify-content: center; gap: 5px; }
.vdots i { background: #333; }
.vdiv { height: 1px; background: #e1dfdd; margin-top: 12px; }
.fieldh { padding-left: 14px; margin-top: 10px; line-height: 20px; color: #323130; }
.fieldh.bold { font-weight: 600; margin-top: 14px; }
.drop { margin: 6px 7px 0 5px; background: #fff; border: 1px dashed #c8c6c4; display: flex; align-items: center; white-space: nowrap; color: #323130; }
.d1 { height: 34px; padding-left: 12px; }
.d2 { height: 32px; padding-left: 10px; margin-top: 8px; }
.trow { display: flex; justify-content: space-between; align-items: center; height: 33px; padding: 0 7px 0 14px; color: #323130; }
.tfirst { margin-top: 5px; }
.tog { width: 40px; height: 20px; border: 1px solid #8a8886; background: #fff; border-radius: 10px; display: flex; align-items: center; padding: 0 4px; }
.tog i { width: 11px; height: 11px; border-radius: 50%; background: #605e5c; display: block; }
.tog.on { background: #605e5c; border-color: #605e5c; justify-content: space-between; }
.tog.on i { background: #fff; }

/* data */
.data { flex: 1; padding-top: 12px; font-size: 14px; color: #484644; }
.dh { padding: 0 10px 0 11px; }
.search { margin: 19px 5px 0 5px; height: 33px; border: 1px solid #8a8886; border-radius: 2px; background: #fff; display: flex; align-items: center; gap: 9px; padding-left: 8px; font-size: 16px; color: #605e5c; }
.tree { list-style: none; margin: 11px 0 0; padding: 0; }
.node, .leaf { height: 30px; display: flex; align-items: center; white-space: nowrap; }
.node { padding-left: 9px; }
.chev { margin-right: 5px; }
.tbi { margin-right: 8px; }
.leaf { padding-left: 48px; }
.cb { width: 15px; height: 15px; border: 1px solid #8a8886; border-radius: 2px; background: #fff; margin-right: 10px; }
.fi { width: 14px; height: 18px; margin-right: 8px; }

/* status */
.status { height: 30px; flex: none; border-top: 2px solid #e1dfdd; display: flex; align-items: center; justify-content: space-between; padding: 0 29px 2px 6px; font-size: 14px; color: #484644; }
.zoomctl { display: flex; align-items: center; }
.zb { width: 12px; text-align: center; font-size: 16px; }
.slider { width: 125px; height: 1px; background: #605e5c; position: relative; margin: 0 6px 0 2px; }
.thumb { position: absolute; left: 44px; top: -6px; width: 4px; height: 13px; background: #605e5c; }
.mid { position: absolute; left: 63px; top: -3px; width: 1px; height: 7px; background: #605e5c; }
.pct { margin: 0 24px 0 22px; color: #605e5c; }

/* taskbar */
.taskbar { height: 60px; flex: none; color: #fff; background: linear-gradient(90deg, #1c2330 0%, #1c2330 22%, #12215e 42%, #12215e 62%, #1c2330 82%, #1c2330 100%); display: flex; align-items: center; font-size: 14px; border-top: 1px solid #2a2f3a; }
.weather { width: 585px; flex: none; display: flex; align-items: center; padding-left: 24px; gap: 8px; }
.wtext { display: flex; flex-direction: column; line-height: 20px; margin-top: -2px; }
.apps { display: flex; align-items: center; }
.winlogo { margin-right: 16px; }
.tsearch { width: 275px; height: 40px; border-radius: 20px; background: #2b3570; display: flex; align-items: center; padding-left: 14px; gap: 12px; font-size: 16px; color: #e6e6e6; margin-right: 15px; position: relative; }
.bing { margin-left: auto; margin-right: 8px; }
.tv { margin-right: 11px; }
.app { width: 55px; height: 50px; display: flex; align-items: center; justify-content: center; position: relative; }
.app.dot::after { content: ""; position: absolute; bottom: 0; left: 25px; width: 6px; height: 6px; border-radius: 50%; background: #9a9ea8; }
.app.act { background: rgba(255,255,255,.08); border-radius: 4px; width: 50px; margin-left: 3px; }
.app.act::after { content: ""; position: absolute; bottom: 1px; left: 15px; width: 20px; height: 4px; border-radius: 2px; background: #4cc2ff; }
.tray { margin-left: auto; display: flex; align-items: center; padding-right: 24px; }
.lang { width: 62px; margin: 0 6px 0 7px; display: flex; flex-direction: column; align-items: center; line-height: 20px; }
.tray svg + svg { margin-left: 8px; }
.tray svg.cloud { margin-left: 20px; }
.tray svg.batt { margin-left: 10px; }
.clock { display: flex; flex-direction: column; align-items: flex-end; line-height: 20px; margin-left: 22px; }
```
